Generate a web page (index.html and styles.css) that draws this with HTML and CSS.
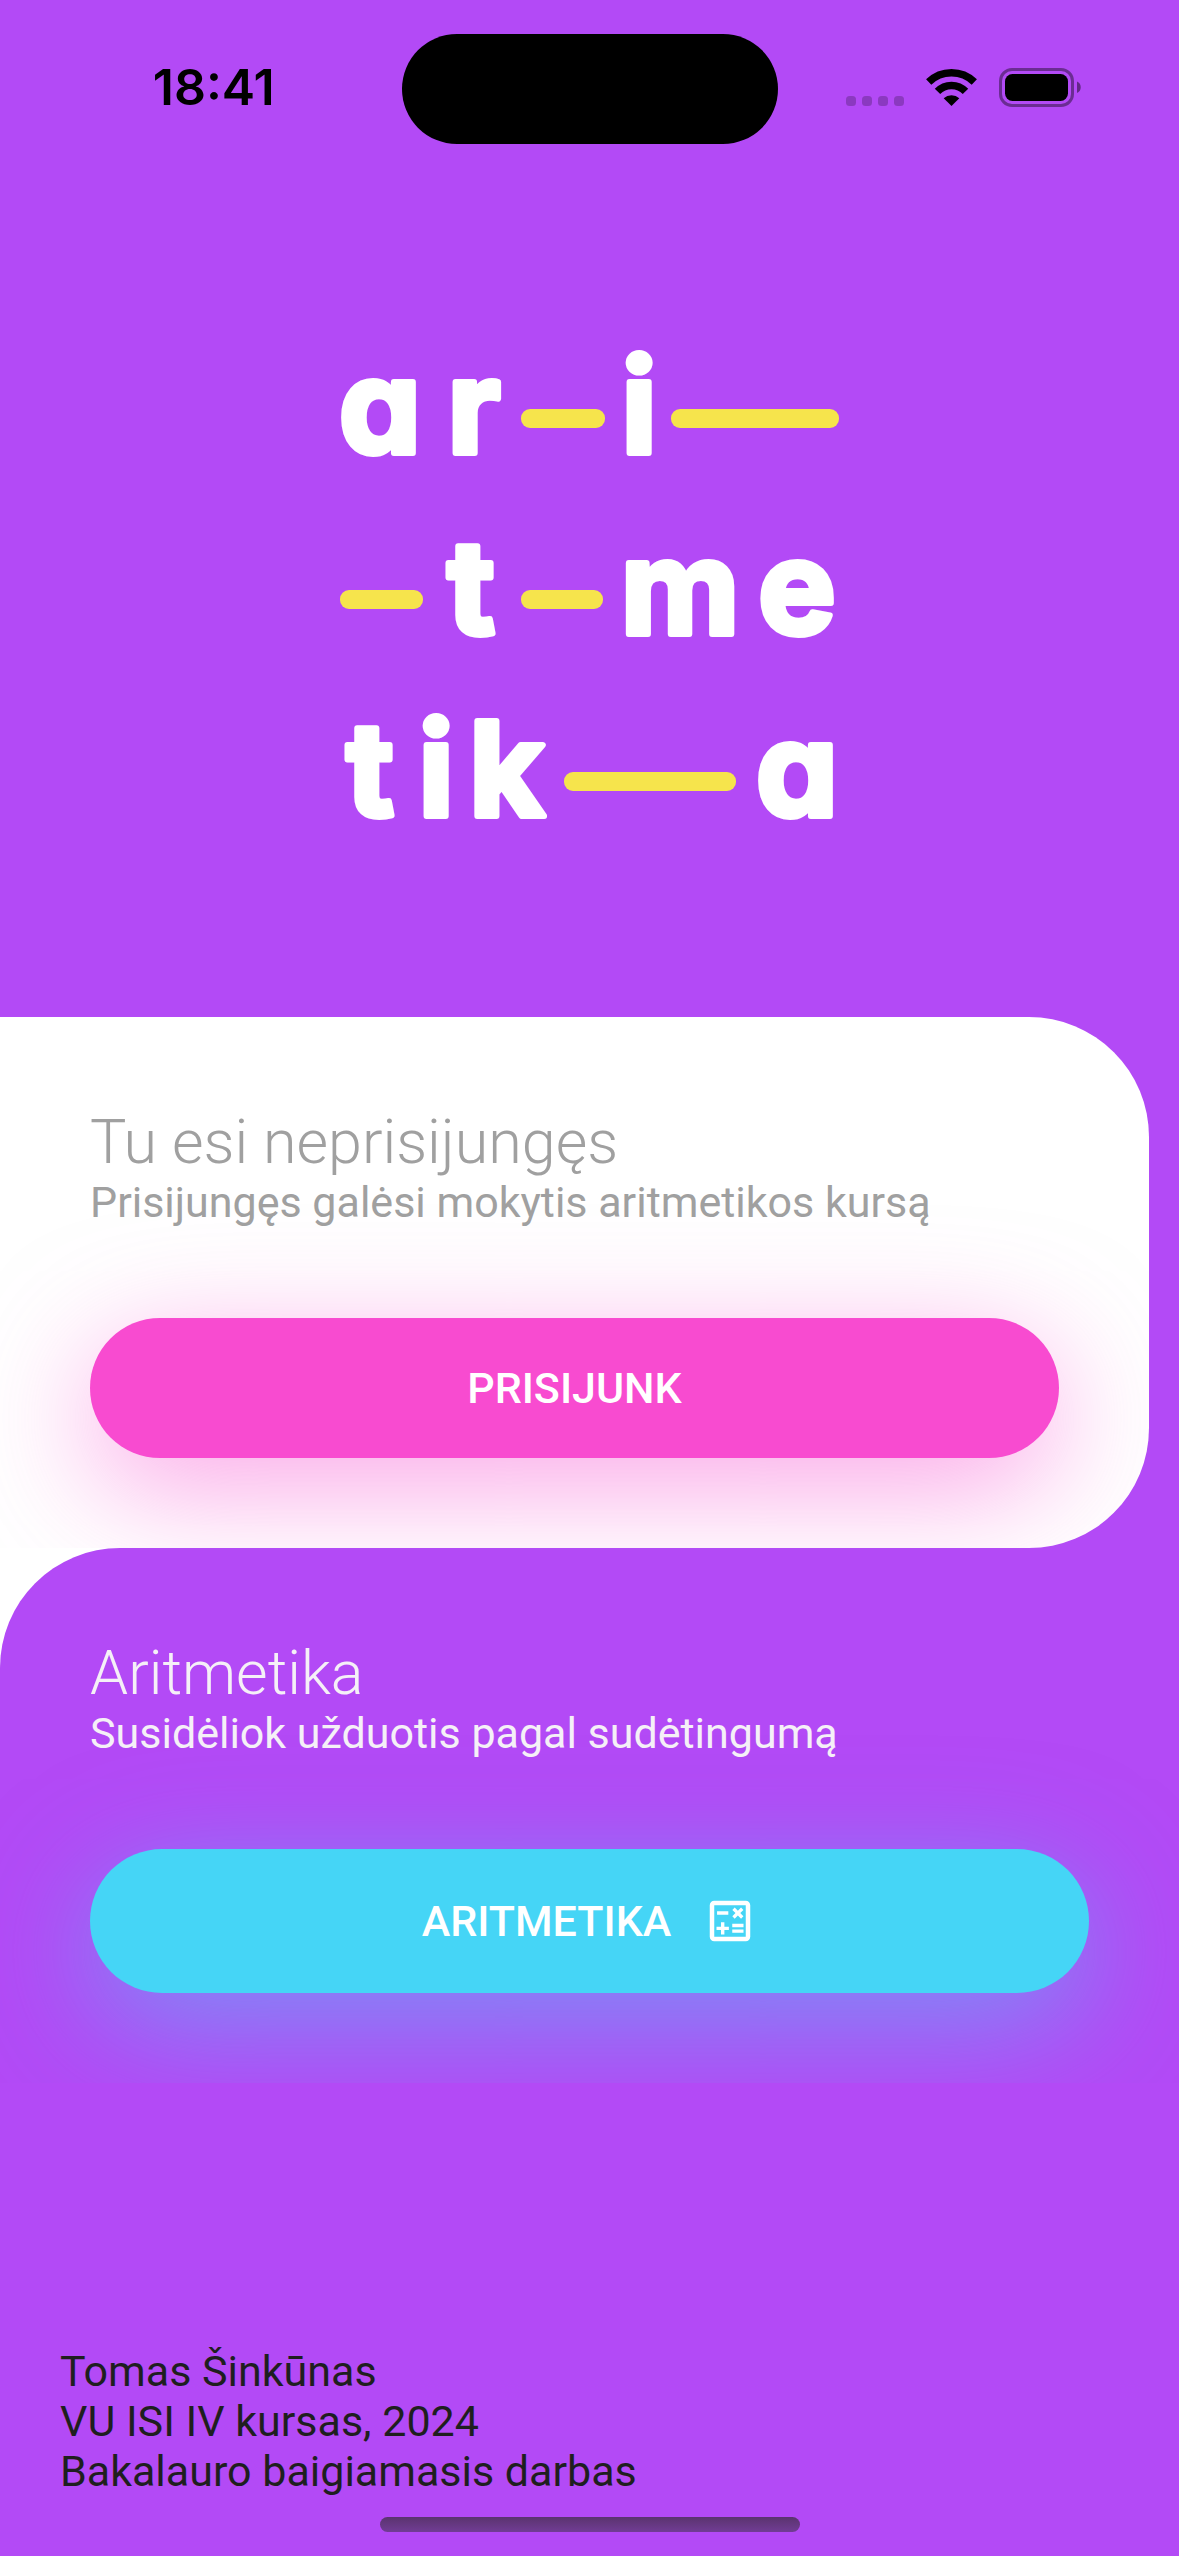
FILE: index.html
```html
<!DOCTYPE html>
<html lang="lt">
<head>
  <meta charset="utf-8">
  <meta name="viewport" content="width=device-width, initial-scale=1">
  <title>Aritmetika</title>
  <link rel="stylesheet" href="styles.css">
</head>
<body>
  <header class="status">
    <time class="status-time">18:41</time>
    <span class="island"></span>
    <div class="status-icons">
      <svg width="240" height="58" viewBox="0 0 240 58" aria-hidden="true">
        <g fill-opacity=".22">
          <rect x="4" y="36" width="10" height="10" rx="3.500"/>
          <rect x="20" y="36" width="10" height="10" rx="3.500"/>
          <rect x="36" y="36" width="10" height="10" rx="3.500"/>
          <rect x="52" y="36" width="10" height="10" rx="3.500"/>
        </g>
        <g fill="none" stroke="#000" stroke-width="7.500">
          <path d="M86.700 22A32.700 32.700 0 0 1 132.300 22"/>
          <path d="M95.500 31.400A19.300 19.300 0 0 1 123.500 31.400"/>
        </g>
        <path d="M109.500 46L101.700 38.300A11.500 11.500 0 0 1 117.300 38.300z"/>
        <rect x="158.500" y="9.500" width="72" height="36" rx="11.500" fill="none" stroke="#000" stroke-opacity=".4" stroke-width="3"/>
        <rect x="163" y="14" width="63" height="27" rx="7.500"/>
        <path d="M235 21.500c5 2 5 9.500 0 11.500z" fill-opacity=".45"/>
      </svg>
    </div>
  </header>

  <main class="page">
    <div class="hero">
      <svg class="logo" viewBox="0 0 500 480" width="500" height="480" role="img" aria-label="aritmetika">
        <g class="logo-letters">
          <text y="110" x="40 134 299">ari</text>
          <text y="291" x="131 340 457">tme</text>
          <text y="473" x="30 96 167 457">tika</text>
        </g>
        <g class="logo-bars">
          <rect x="181" y="66" width="84" height="19" rx="9"/>
          <rect x="331" y="66" width="168" height="19" rx="9"/>
          <rect x="0" y="247" width="83" height="19" rx="9"/>
          <rect x="181" y="247" width="82" height="19" rx="9"/>
          <rect x="224" y="429" width="172" height="19" rx="9"/>
        </g>
      </svg>
    </div>

    <div class="panels">
      <section class="panel panel-login">
        <h2 class="panel-title">Tu esi neprisijungęs</h2>
        <p class="panel-text">Prisijungęs galėsi mokytis aritmetikos kursą</p>
        <button class="button button-pink" type="button">PRISIJUNK</button>
      </section>
      <section class="panel panel-practice">
        <h2 class="panel-title">Aritmetika</h2>
        <p class="panel-text">Susidėliok užduotis pagal sudėtingumą</p>
        <button class="button button-blue" type="button">ARITMETIKA
          <svg width="54" height="54" viewBox="0 0 24 24" fill="currentColor" aria-hidden="true">
            <path d="M19 3H5c-1.100 0-2 .9-2 2v14c0 1.100.9 2 2 2h14c1.100 0 2-.9 2-2V5c0-1.100-.9-2-2-2zm0 16H5V5h14v14z"/>
            <path d="M6.250 7.720h5v1.500h-5zM13 15.750h5v1.500h-5zM13 13.250h5v1.500h-5zM8 18h1.500v-2h2v-1.500h-2v-2H8v2H6V16h2zM14.090 10.950l1.410-1.410 1.410 1.410 1.060-1.060-1.410-1.420 1.410-1.410L16.910 6 15.500 7.410 14.090 6l-1.060 1.060 1.410 1.410-1.410 1.420z"/>
          </svg>
        </button>
      </section>
    </div>
  </main>

  <footer class="footer">
    <p class="credits">Tomas Šinkūnas<br>VU ISI IV kursas, 2024<br>Bakalauro baigiamasis darbas</p>
    <span class="home-bar"></span>
  </footer>
</body>
</html>
```
FILE: styles.css
```css
:root {
  --purple: #b34af6;
  --pink: #f84bd0;
  --blue: #45d5f6;
  --yellow: #f6e44c;
}

* {
  box-sizing: border-box;
}

body {
  display: flex;
  flex-direction: column;
  min-height: 100vh;
  margin: 0;
  background: var(--purple);
  color: #1f1f1f;
  font-family: Roboto, "Noto Sans", sans-serif;
  font-size: 43px;
  line-height: 50px;
}

h2,
p {
  margin: 0;
}

.status {
  display: grid;
  grid-template-columns: 1fr 376px 1fr;
  align-items: center;
  padding-top: 34px;
  color: #000;
}

.status-time {
  padding: 0 0 4px 26px;
  font: 600 50px/60px Inter, sans-serif;
  text-align: center;
}

.island {
  height: 110px;
  border-radius: 55px;
  background: #000;
}

.status-icons {
  display: flex;
  justify-content: center;
  padding-right: 32px;
}

.hero {
  display: flex;
  justify-content: center;
  padding: 199px 0 194px;
}

.logo {
  overflow: visible;
}

.logo-letters {
  fill: #fff;
  stroke: #fff;
  stroke-width: 6px;
  stroke-linejoin: round;
  font: 700 130px Inter, sans-serif;
  font-feature-settings: "cv11" 1;
  text-anchor: middle;
}

.logo-bars {
  fill: var(--yellow);
}

.panels {
  background: linear-gradient(#fff, #fff) 0 531px / 50% 125px no-repeat;
}

.panel {
  padding: 90px;
  overflow: hidden;
}

.panel-login {
  margin-right: 30px;
  border-radius: 0 120px 120px 0;
  background: #fff;
  color: #a0a0a0;
}

.panel-practice {
  border-radius: 120px 0 0 0;
  background: var(--purple);
  color: #f5f0f7;
}

.panel-title {
  font-size: 61px;
  font-weight: 300;
  line-height: 70px;
}

.panel-text {
  margin-bottom: 91px;
}

.button {
  display: flex;
  align-items: center;
  justify-content: center;
  gap: 32px;
  width: 100%;
  padding: 45px 60px;
  border: 0;
  border-radius: 72px;
  color: #fff;
  font: 500 43px/50px Roboto, "Noto Sans", sans-serif;
}

.button-pink {
  background: var(--pink);
  box-shadow: 0 30px 120px rgb(248 75 208 / 50%);
}

.button-blue {
  background: var(--blue);
  box-shadow: 0 30px 120px rgb(69 213 247 / 50%);
}

.footer {
  display: flex;
  flex-direction: column;
  gap: 21px;
  margin-top: auto;
  padding: 0 60px 24px;
}

.home-bar {
  align-self: center;
  width: 420px;
  height: 15px;
  border-radius: 8px;
  background: linear-gradient(#5a346f, #713c94);
}
```
